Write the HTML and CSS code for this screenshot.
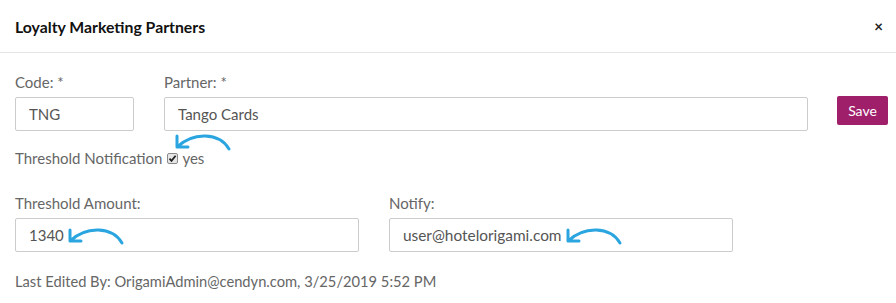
FILE: index.html
```html
<!DOCTYPE html>
<html lang="en">
<head>
<meta charset="UTF-8">
<title>Loyalty Marketing Partners</title>
<link rel="stylesheet" href="styles.css">
</head>
<body>

<div class="modal">
  <div class="modal-header">
    <h4 class="modal-title">Loyalty Marketing Partners</h4>
    <span class="close">&times;</span>
  </div>

  <div class="modal-body">
    <div class="row row-top">
      <div class="field field-code">
        <label>Code: *</label>
        <div class="input">TNG</div>
      </div>
      <div class="field field-partner">
        <label>Partner: *</label>
        <div class="input">Tango Cards</div>
      </div>
      <button class="btn-save">Save</button>
    </div>

    <div class="notify-line">
      <span>Threshold Notification</span>
      <svg class="check" width="11" height="11" viewBox="0 0 11 11">
        <rect x="0.5" y="0.5" width="10" height="10" rx="1.5" fill="#e6e6e6" stroke="#8a8a8a"/>
        <path d="M2.5 5.6 L4.5 7.8 L8.6 2.8" fill="none" stroke="#222" stroke-width="1.8"/>
      </svg>
      <span>yes</span>
      <svg class="arrow arrow-check" width="60" height="20" viewBox="0 0 60 20">
        <path d="M56 17 C46 0 20 0 4 15 M4 4 L4 15 L15 15" fill="none" stroke="#2aa5e0" stroke-width="3" stroke-linecap="round" stroke-linejoin="round"/>
      </svg>
    </div>

    <div class="row row-bottom">
      <div class="field field-half">
        <label>Threshold Amount:</label>
        <div class="input">1340
          <svg class="arrow arrow-inline" width="60" height="20" viewBox="0 0 60 20">
            <path d="M56 17 C46 0 20 0 4 15 M4 4 L4 15 L15 15" fill="none" stroke="#2aa5e0" stroke-width="3" stroke-linecap="round" stroke-linejoin="round"/>
          </svg>
        </div>
      </div>
      <div class="field field-half">
        <label>Notify:</label>
        <div class="input input-mail">user@hotelorigami.com
          <svg class="arrow arrow-inline" width="60" height="20" viewBox="0 0 60 20">
            <path d="M56 17 C46 0 20 0 4 15 M4 4 L4 15 L15 15" fill="none" stroke="#2aa5e0" stroke-width="3" stroke-linecap="round" stroke-linejoin="round"/>
          </svg>
        </div>
      </div>
    </div>

    <p class="edited">Last Edited By: OrigamiAdmin@cendyn.com, 3/25/2019 5:52 PM</p>
  </div>
</div>

</body>
</html>
```

FILE: styles.css
```css
body {
  margin: 0;
  padding: 0;
  background: #fff;
  font-family: Lato, "Open Sans", sans-serif;
  color: #666;
}

.modal {
  width: 896px;
}

.modal-header {
  height: 52px;
  padding: 0 13px 0 15px;
  border-bottom: 1px solid #e5e5e5;
  display: flex;
  align-items: center;
  justify-content: space-between;
}

.modal-title {
  margin: 0;
  font-size: 15.8px;
  font-weight: bold;
  color: #111;
}

.close {
  font-size: 15px;
  font-weight: bold;
  color: #222;
  line-height: 1;
}

.modal-body {
  padding: 19px 0 0 15px;
}

.row {
  display: flex;
  gap: 30px;
}

.row > * {
  flex-shrink: 0;
}

.field label {
  display: block;
  font-size: 15px;
  line-height: 20px;
  margin-bottom: 5px;
}

.input {
  position: relative;
  height: 34px;
  box-sizing: border-box;
  border: 1px solid #ccc;
  border-radius: 2px;
  padding: 0 13px;
  display: flex;
  align-items: center;
  font-size: 15px;
  color: #555;
}

.input-mail {
  font-size: 15.4px;
}

.field-code {
  width: 119px;
}

.field-partner {
  width: 644px;
}

.btn-save {
  margin: 24px 0 0 -1px;
  width: 51px;
  height: 29px;
  padding: 0;
  border: none;
  border-radius: 2px;
  background: #a01f6b;
  color: #fff;
  font-family: inherit;
  font-size: 14px;
}

.notify-line {
  position: relative;
  margin-top: 17px;
  display: flex;
  align-items: center;
  gap: 4px;
  font-size: 15px;
  line-height: 20px;
}

.check {
  margin-left: 1px;
}

.arrow {
  position: absolute;
  overflow: visible;
}

.arrow-check {
  left: 158px;
  top: -16px;
}

.arrow-inline {
  position: relative;
  margin-left: 2px;
  top: 1px;
}

.row-bottom {
  margin-top: 25px;
}

.field-half {
  width: 344px;
}

.edited {
  margin: 19px 0 0 0;
  font-size: 14.7px;
  line-height: 20px;
}
```
